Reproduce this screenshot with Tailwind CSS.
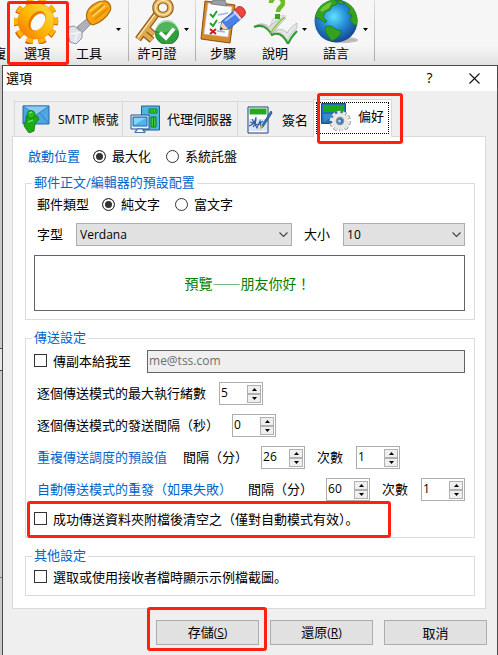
<!DOCTYPE html>
<html lang="zh">
<head>
<meta charset="utf-8">
<meta name="viewport" content="width=device-width, initial-scale=1">
<title>選項</title>
<script src="https://cdn.jsdelivr.net/npm/@tailwindcss/browser@4"></script>
</head>
<body class="min-h-screen flex flex-col bg-[#c9c9c9] text-black text-[13px] leading-[18px] font-['Open_Sans','Noto_Sans_CJK_SC',sans-serif]">

<!-- Toolbar -->
<nav aria-label="工具列" class="flex h-[65px] overflow-hidden whitespace-nowrap bg-linear-to-b from-[#f6f6f6] from-70% to-[#e2e2e2]">
  <button class="w-2 shrink-0 flex justify-end items-end pb-[3px] pr-[2px] overflow-hidden">複</button>
  <button class="relative w-[58px] shrink-0 flex flex-col items-center">
    <svg class="w-[46px] h-11" viewBox="0 0 46 44" aria-hidden="true">
      <defs><linearGradient id="gear" x1="0" y1="1" x2="1" y2="0"><stop offset="0" stop-color="#f56a00"/><stop offset=".45" stop-color="#ffb400"/><stop offset="1" stop-color="#ffe24a"/></linearGradient></defs>
      <g transform="rotate(25 22 21)">
        <ellipse cx="22" cy="22" rx="19" ry="20" fill="none" stroke="#d9620a" stroke-width="7" pathLength="100" stroke-dasharray="5.6 4.4"/>
        <ellipse cx="22" cy="21" rx="18.500" ry="19.500" fill="none" stroke="#ffb508" stroke-width="6.500" pathLength="100" stroke-dasharray="5.4 4.6" stroke-dashoffset="-.2"/>
      </g>
      <path fill="url(#gear)" stroke="#e08a0c" stroke-width=".6" d="M22 3a18 18 0 1 0 .1 0z"/>
      <ellipse cx="23" cy="21" rx="7.500" ry="11" transform="rotate(35 23 21)" fill="#e87a00"/>
      <ellipse cx="24" cy="22" rx="6" ry="9.500" transform="rotate(35 24 22)" fill="#fafafa"/>
    </svg>
    <span>選項</span>
    <span class="absolute inset-y-0 -left-px -right-[3px] top-px border-[3px] border-[#ff2010] rounded-[3px] pointer-events-none"></span>
  </button>
  <button class="w-[46px] shrink-0 flex flex-col items-center">
    <svg class="w-[46px] h-11" viewBox="0 0 46 44" aria-hidden="true">
      <path d="M11 27l12-10 4 5-11 11z" fill="#aeb2ba" stroke="#777" stroke-width=".7"/>
      <path d="M3 27l5-1 8 6v6l-6 6-6-2-2-7z" fill="#dfe3ea" stroke="#8d93a0" stroke-width="1"/>
      <path d="M4 34l7-1 4-1M11 33l-2 9" stroke="#fff" fill="none"/>
      <path d="M21 13c1-6 10-12 16-12 6-1 9 6 7 10-3 6-10 12-17 14-4-1-8-7-6-12z" fill="#f7a511" stroke="#b56608" stroke-width="1.2"/>
      <path d="M26 14L37 5M29 19L41 9" stroke="#d9860a" stroke-width="1.500" stroke-linecap="round"/>
      <path d="M27 16L39 6M24 11L35 3" stroke="#ffdc62" stroke-width="1.500" stroke-linecap="round"/>
    </svg>
    <span>工具</span>
  </button>
  <button aria-label="工具選單" class="w-3 shrink-0 flex items-start justify-center pt-7"><svg class="w-[5px] h-[3px]" viewBox="0 0 5 3"><path d="M0 0h5L2.5 3z"/></svg></button>
  <span class="ml-1 w-px shrink-0 bg-linear-to-b from-[#ddd] to-[#aaa] mb-1"></span>
  <button class="ml-[5px] w-[46px] shrink-0 flex flex-col items-center">
    <svg class="w-[46px] h-11" viewBox="0 0 46 46" preserveAspectRatio="none" aria-hidden="true">
      <path d="M23 14L4 41M13 30l7 6M10 35l8 7" stroke="#8e5a17" stroke-width="7" fill="none"/>
      <path d="M23 14L4 41M13 30l7 6M10 35l8 7" stroke="#dfaa52" stroke-width="4.5" fill="none"/>
      <path d="M21 15L4 39" stroke="#ffeaa5" stroke-width="1.3"/>
      <circle cx="29" cy="8" r="7.5" fill="none" stroke="#8e5a17" stroke-width="6.5"/>
      <circle cx="29" cy="8" r="7.5" fill="none" stroke="#e3b160" stroke-width="4.5"/>
      <circle cx="29" cy="8" r="7.5" fill="none" stroke="#ffe9a8" stroke-width="1.2"/>
      <circle cx="33" cy="35" r="11.5" fill="#2f9e3c" stroke="#1b7a2c"/>
      <path d="M22 32a11 11 0 0 1 22 0c-7-2-14 5-22 0z" fill="#6cc56f" opacity=".6"/>
      <path d="M26 34l6 6 8-10" fill="none" stroke="#fff" stroke-width="3.6"/>
    </svg>
    <span>許可證</span>
  </button>
  <button aria-label="許可證選單" class="w-3 shrink-0 flex items-start justify-center pt-7"><svg class="w-[5px] h-[3px]" viewBox="0 0 5 3"><path d="M0 0h5L2.5 3z"/></svg></button>
  <span class="ml-[3px] w-px shrink-0 bg-linear-to-b from-[#ddd] to-[#aaa] mb-1"></span>
  <button class="ml-1 w-[46px] shrink-0 flex flex-col items-center">
    <svg class="w-[46px] h-11" viewBox="0 0 46 44" aria-hidden="true">
      <path d="M5 1l30 4-5 38-29-4z" fill="#d88a28" stroke="#8a4f0e" stroke-width="1" stroke-linejoin="round"/>
      <path d="M8 3l24 4-4 30-24-3z" fill="#fbfcff" stroke="#b8c4dd" stroke-width=".6"/>
      <path d="M13 0h12l2 6-16-2z" fill="#9a9ea6" stroke="#666" stroke-width=".6"/>
      <path d="M18 15l10-2M18 23l7-2M17 31l8 1" stroke="#a5b4dc" stroke-width="1.3"/>
      <path d="M10 14l3 3 4-6M10 23l3 3 4-6" fill="none" stroke="#23a32b" stroke-width="2"/>
      <path d="M10 29l6 5M16 29l-6 5" stroke="#cf1b16" stroke-width="2"/>
      <path d="M20 30l2-9 13-11 7 8-13 11z" fill="#4b7fe8" stroke="#2449a8" stroke-width=".8"/>
      <path d="M25 21l12-9" stroke="#a5c6ff" stroke-width="2"/>
      <path d="M20 30l2-8 6 7z" fill="#f2d7a4"/><path d="M20 30l1-3 2 2z" fill="#222"/>
      <path d="M33 12l2-2 7 8-2 2z" fill="#cfd6e3"/>
      <path d="M35 10c2-4 6-5 9-1s1 6-2 9z" fill="#f0453c" stroke="#b31f1c" stroke-width=".8"/>
    </svg>
    <span>步驟</span>
  </button>
  <button class="ml-[6px] w-[46px] shrink-0 flex flex-col items-center">
    <svg class="w-[46px] h-11" viewBox="0 0 46 44" aria-hidden="true">
      <path d="M20 36c4-8 9-15 14-20-6-1-10 0-13 3-3 6-4 11-1 17z" fill="#e9ebea" stroke="#b6bbb7" stroke-width=".6"/>
      <path d="M3 26c7-4 12-1 17 9 4-7 9-12 14-17-6 0-14 5-17 9-4-4-9-4-14-1z" fill="#d9dcda" stroke="#a2a8a4" stroke-width=".6"/>
      <path d="M18 34c7-4 13-2 17 7 2-5 6-9 10-13v-5c-5 3-8 6-10 10-4-5-9-5-17 1z" fill="#e4e6e5" stroke="#a2a8a4" stroke-width=".6"/>
      <path d="M2 27c8-3 13 0 18 8 6-3 11-1 16 9 2-5 5-9 9-13" fill="none" stroke="#2b9b2b" stroke-width="2"/>
      <path d="M18 34c4-7 9-12 14-17" stroke="#8cc63b" stroke-width="1.5" fill="none"/>
      <path d="M19 3c0-7 12-8 12 0 0 4-5 4-5 9" fill="none" stroke="#6dbd25" stroke-width="4.5"/>
      <path d="M23 14h5v5h-5z" fill="#36a426"/>
    </svg>
    <span>說明</span>
  </button>
  <button aria-label="說明選單" class="w-3 shrink-0 flex items-start justify-center pt-7"><svg class="w-[5px] h-[3px]" viewBox="0 0 5 3"><path d="M0 0h5L2.5 3z"/></svg></button>
  <button class="ml-[3px] w-[46px] shrink-0 flex flex-col items-center">
    <svg class="w-[46px] h-11" viewBox="0 0 46 44" aria-hidden="true">
      <defs><radialGradient id="sea" cx=".45" cy=".4" r=".65"><stop offset="0" stop-color="#62e2ff"/><stop offset=".45" stop-color="#238fd8"/><stop offset="1" stop-color="#143c86"/></radialGradient>
      <clipPath id="disc"><circle cx="23" cy="21" r="21.5"/></clipPath></defs>
      <ellipse cx="31" cy="40" rx="14" ry="3" fill="#bbb"/>
      <circle cx="23" cy="21" r="21.5" fill="url(#sea)"/>
      <g clip-path="url(#disc)" fill="#36a11f" stroke="#1d7415" stroke-width=".7">
        <path d="M3 13C6 5 12 0 20-1l5 3-2 3-4 1-2 4-5 2-2 5 4 4-2 2-5-4-5-2z"/>
        <path d="M12 27c4-2 8-1 10 2l6 2c0 4-3 5-5 8l-5 2c-1-4-6-6-6-14z"/>
        <path d="M31 3l5-3 8 9 3 8-1 8-5 0-4-5 2-5-4-2 2-4z"/>
        <path d="M24 0l6 1 1 3-5 0z"/>
      </g>
      <path d="M7 10c3-4 7-7 12-8l-3 6-7 4z" fill="#8cdc3a" opacity=".7"/>
    </svg>
    <span>語言</span>
  </button>
  <button aria-label="語言選單" class="w-3 shrink-0 flex items-start justify-center pt-7"><svg class="w-[5px] h-[3px]" viewBox="0 0 5 3"><path d="M0 0h5L2.5 3z"/></svg></button>
  <span class="ml-[3px] w-px shrink-0 bg-linear-to-b from-[#ddd] to-[#aaa] mb-1"></span>
</nav>

<div class="flex flex-1">
  <!-- Sliver of the window behind the dialog -->
  <div class="w-[2px] shrink-0 flex flex-col">
    <div class="h-[283px]"></div>
    <div class="h-[23px] border-y border-[#444] bg-[#e4e4e4]"></div>
    <div class="h-[207px] border-b border-[#777]"></div>
  </div>

  <!-- Options dialog -->
  <main role="dialog" aria-labelledby="dialog-title" class="flex-1 flex flex-col border-t border-x border-[#4a4a4a] bg-[#efefef]">
    <header class="h-[25px] bg-white flex items-center pl-[3px]">
      <h1 id="dialog-title" class="flex-1 pb-[2px]">選項</h1>
      <button aria-label="說明" class="w-[45px] font-medium text-[14px] pb-[2px]">?</button>
      <button aria-label="關閉" class="w-[45px] flex justify-center"><svg class="w-[11px] h-[11px]" viewBox="0 0 11 11"><path d="M.5.5l10 10M10.5.5l-10 10" stroke="#111" stroke-width="1.1"/></svg></button>
    </header>

    <div class="pl-[9px] pr-[11px] pt-2 flex flex-col">
      <div role="tablist" class="flex items-end pl-[2px] -mb-px whitespace-nowrap">
        <button role="tab" class="h-9 w-[109px] border border-[#d9d9d9] flex items-center pl-[7px] gap-2">
          <svg class="w-7 h-7 shrink-0" viewBox="0 0 28 28" aria-hidden="true">
            <path d="M1 1h26v18H1z" fill="#4ea6e4" stroke="#27669f"/><path d="M1 1l13 9L27 1zM1 19l9-11M27 19L18 8" fill="#8ccbf4" stroke="#2c75b3" stroke-width=".8"/>
            <path d="M4 11l6 1 5-1 2 3-4 5-1 7-5 2-5-7 2-5z" fill="#1dac16" stroke="#11730c" stroke-width=".8"/><circle cx="9" cy="9.500" r="4" fill="#25bd1d" stroke="#11730c" stroke-width=".8"/><path d="M7 8l3-1M6 17l5-2" stroke="#86ee75" stroke-width="1.300"/>
          </svg><span><span class="text-[12px]">SMTP</span> 帳號</span>
        </button>
        <button role="tab" class="h-9 w-[115px] border-y border-r border-[#d9d9d9] flex items-center pl-[7px] gap-[7px]">
          <svg class="w-[30px] h-7 shrink-0" viewBox="0 0 30 28" aria-hidden="true">
            <path d="M11.500 1h18v24h-18z" fill="#4db5ea" stroke="#255e96"/><path d="M19 4h8v4h-8z" fill="#48dd35" stroke="#137d1d"/><path d="M20 6h6" stroke="#104f16" stroke-dasharray="1.500 1"/><path d="M21 12h5v10h-5z" fill="#3ccf2e" stroke="#137d1d"/><path d="M23.500 12v10" stroke="#137d1d"/>
            <path d="M1 10h18v14H1z" fill="#e8f5fd" stroke="#1e4f86"/><path d="M3 12h14v9H3z" fill="#4eb6ef" stroke="#2365a4"/><path d="M4 13h12L4 20z" fill="#87d3fb"/><path d="M7 24h6v2h2v1.500H5V26h2z" fill="#fff" stroke="#1e4f86" stroke-width=".8"/>
          </svg><span>代理伺服器</span>
        </button>
        <button role="tab" class="h-9 w-[75px] border-t border-[#d9d9d9] flex items-center pl-[9px] gap-[9px]">
          <svg class="w-[26px] h-7 shrink-0" viewBox="0 0 26 28" aria-hidden="true">
            <path d="M1 1h20v26H1z" fill="#fff" stroke="#153e70"/><path d="M2.500 2.500h17v6h-17z" fill="#22ab1c"/><path d="M2 13h18v12H2z" fill="#d9e5fa"/><path d="M2 20c5-2 6-4 7-9 0 5-1 8-3 10M3 16l8 3 5-4M5 13l5 9 3-7 1 6" fill="none" stroke="#315e97" stroke-width="1.200"/><path d="M24 5l1 2-9 14-2 1 1-3z" fill="#3378c0" stroke="#153e70" stroke-width=".7"/><path d="M14 19l2 1-4 5z" fill="#edbd22"/>
          </svg><span>簽名</span>
        </button>
        <button role="tab" aria-selected="true" class="relative h-[38px] w-[79px] border-t border-x border-[#d9d9d9] bg-white p-[2px] pb-[3px]">
          <span class="h-full border border-dotted border-black flex items-start gap-[7px] pl-1">
            <svg class="w-[30px] h-7 shrink-0" viewBox="0 0 30 28" aria-hidden="true">
              <path d="M.5.500h24v20H.5z" fill="#206eb7" stroke="#174f89"/><path d="M2 2h21v7H2z" fill="#1da71b"/><path d="M2 11h14L3 19z" fill="#3a89ce"/>
              <circle cx="19" cy="18" r="9" fill="none" stroke="#666" stroke-width="3.500" pathLength="100" stroke-dasharray="6.5 3.5"/><circle cx="19" cy="18" r="8.500" fill="none" stroke="#e4e4e4" stroke-width="3.500" pathLength="100" stroke-dasharray="6 4"/><circle cx="19" cy="18" r="8" fill="#e8e8e8"/><circle cx="19" cy="18" r="3.500" fill="#2873b8" stroke="#8a929c" stroke-width="1.500"/><circle cx="18.500" cy="18" r="1.500" fill="#b9dcf5"/>
            </svg><span class="pt-1">偏好</span>
          </span>
          <span class="absolute -right-3 -top-[7px] -bottom-[7px] left-[3px] border-[3px] border-[#ff2010] rounded-[3px] pointer-events-none"></span>
        </button>
      </div>

      <form role="tabpanel" class="border border-[#d9d9d9] bg-white pl-3 pr-[10px] pt-[10px] pb-3 flex flex-col whitespace-nowrap">
        <div class="h-[18px] mb-2 flex items-center pl-[3px]">
          <span class="text-[#0066cc] mr-[13px]">啟動位置</span>
          <label class="flex items-center gap-[6px] mr-[15px]"><input type="radio" name="start" checked class="appearance-none size-[13px] rounded-full border border-[#333] checked:bg-[#333] shadow-[inset_0_0_0_2px_#fff]">最大化</label>
          <label class="flex items-center gap-[6px]"><input type="radio" name="start" class="appearance-none size-[13px] rounded-full border border-[#333]">系統託盤</label>
        </div>

        <fieldset class="border border-[#dcdcdc] pl-2 pr-[9px] pb-2">
          <legend class="h-5 px-[2px] -ml-[2px] text-[#0066cc]">郵件正文/編輯器的預設配置</legend>
          <div class="h-[22px] flex items-center pl-[3px]">
            <span class="mr-[13px]">郵件類型</span>
            <label class="flex items-center gap-[6px] mr-[15px]"><input type="radio" name="type" checked class="appearance-none size-[13px] rounded-full border border-[#333] checked:bg-[#333] shadow-[inset_0_0_0_2px_#fff]">純文字</label>
            <label class="flex items-center gap-[6px]"><input type="radio" name="type" class="appearance-none size-[13px] rounded-full border border-[#333]">富文字</label>
          </div>
          <div class="mt-2 flex items-center pl-[3px]">
            <label for="font" class="mr-[13px] pb-[2px]">字型</label>
            <span class="relative flex-[216] flex mr-3">
              <select id="font" class="appearance-none w-full h-[23px] border border-[#adadad] bg-[#e1e1e1] pl-[3px] text-[12px]"><option>Verdana</option></select>
              <svg class="absolute right-1 top-[9px] w-[9px] h-[6px] pointer-events-none" viewBox="0 0 9 6"><path d="M.5.500l4 4 4-4" fill="none" stroke="#444" stroke-width="1.100"/></svg>
            </span>
            <label for="size" class="mr-[13px] pb-[2px]">大小</label>
            <span class="relative flex-[122] flex">
              <select id="size" class="appearance-none w-full h-[23px] border border-[#adadad] bg-[#e1e1e1] pl-[3px] text-[12px]"><option>10</option></select>
              <svg class="absolute right-1 top-[9px] w-[9px] h-[6px] pointer-events-none" viewBox="0 0 9 6"><path d="M.5.500l4 4 4-4" fill="none" stroke="#444" stroke-width="1.100"/></svg>
            </span>
          </div>
          <div lang="zh-Hant" class="mt-[9px] h-14 pr-1 border border-[#646464] flex items-center justify-center text-[14px] text-[#008000] font-['Noto_Sans_CJK_TC',sans-serif]">預覽——朋友你好！</div>
        </fieldset>

        <fieldset class="mt-2 border border-[#dcdcdc] pl-2 pr-[9px] pb-[10px]">
          <legend class="h-5 px-[2px] -ml-[2px] text-[#0066cc]">傳送設定</legend>
          <div class="pt-[2px] flex flex-col gap-[9px]">
            <div class="h-[23px] flex items-center">
              <label class="flex items-center gap-[6px] mr-4 pb-[2px]"><input type="checkbox" class="appearance-none size-[13px] border border-[#333]">傳副本給我至</label>
              <input type="text" aria-label="副本地址" value="me@tss.com" disabled class="flex-1 min-w-0 h-full border border-[#646464] bg-[#efefef] px-[1px] pb-[2px] text-[12px] text-[#6d6d6d]">
            </div>
            <div class="h-[23px] flex items-center pl-[3px]">
              <label for="threads" class="mr-[13px] pb-[2px]">逐個傳送模式的最大執行緒數</label>
              <span class="w-11 h-[23px] border border-[#adadad] flex items-center pl-[1px] pr-[1px]">
                <input id="threads" value="5" class="w-0 flex-1 min-w-0 pb-[2px] text-[12px]">
                <span class="flex flex-col w-[14px] h-[18px]"><button type="button" aria-label="增加" class="flex-1 border border-[#b0b0b0] bg-[#efefef] flex items-center justify-center"><svg class="w-[5px] h-[3px]" viewBox="0 0 5 3"><path d="M0 3h5L2.500 0z"/></svg></button><button type="button" aria-label="減少" class="flex-1 border border-[#b0b0b0] bg-[#efefef] flex items-center justify-center"><svg class="w-[5px] h-[3px]" viewBox="0 0 5 3"><path d="M0 0h5L2.500 3z"/></svg></button></span>
              </span>
            </div>
            <div class="h-[23px] flex items-center pl-[3px]">
              <label for="gap" class="mr-[13px] pb-[2px]">逐個傳送模式的發送間隔（秒）</label>
              <span class="w-11 h-[23px] border border-[#adadad] flex items-center pl-[1px] pr-[1px]">
                <input id="gap" value="0" class="w-0 flex-1 min-w-0 pb-[2px] text-[12px]">
                <span class="flex flex-col w-[14px] h-[18px]"><button type="button" aria-label="增加" class="flex-1 border border-[#b0b0b0] bg-[#efefef] flex items-center justify-center"><svg class="w-[5px] h-[3px]" viewBox="0 0 5 3"><path d="M0 3h5L2.500 0z"/></svg></button><button type="button" aria-label="減少" class="flex-1 border border-[#b0b0b0] bg-[#efefef] flex items-center justify-center"><svg class="w-[5px] h-[3px]" viewBox="0 0 5 3"><path d="M0 0h5L2.500 3z"/></svg></button></span>
              </span>
            </div>
            <div class="h-[23px] flex items-center pl-[3px]">
              <span class="text-[#0066cc] mr-4 pb-[2px]">重複傳送調度的預設值</span>
              <label for="rep-gap" class="mr-[13px] pb-[2px]">間隔（分）</label>
              <span class="w-11 h-[23px] border border-[#adadad] flex items-center pl-[1px] pr-[1px]">
                <input id="rep-gap" value="26" class="w-0 flex-1 min-w-0 pb-[2px] text-[12px]">
                <span class="flex flex-col w-[14px] h-[18px]"><button type="button" aria-label="增加" class="flex-1 border border-[#b0b0b0] bg-[#efefef] flex items-center justify-center"><svg class="w-[5px] h-[3px]" viewBox="0 0 5 3"><path d="M0 3h5L2.500 0z"/></svg></button><button type="button" aria-label="減少" class="flex-1 border border-[#b0b0b0] bg-[#efefef] flex items-center justify-center"><svg class="w-[5px] h-[3px]" viewBox="0 0 5 3"><path d="M0 0h5L2.500 3z"/></svg></button></span>
              </span>
              <label for="rep-n" class="ml-3 mr-[13px] pb-[2px]">次數</label>
              <span class="w-11 h-[23px] border border-[#adadad] flex items-center pl-[1px] pr-[1px]">
                <input id="rep-n" value="1" class="w-0 flex-1 min-w-0 pb-[2px] text-[12px]">
                <span class="flex flex-col w-[14px] h-[18px]"><button type="button" aria-label="增加" class="flex-1 border border-[#b0b0b0] bg-[#efefef] flex items-center justify-center"><svg class="w-[5px] h-[3px]" viewBox="0 0 5 3"><path d="M0 3h5L2.500 0z"/></svg></button><button type="button" aria-label="減少" class="flex-1 border border-[#b0b0b0] bg-[#efefef] flex items-center justify-center"><svg class="w-[5px] h-[3px]" viewBox="0 0 5 3"><path d="M0 0h5L2.500 3z"/></svg></button></span>
              </span>
            </div>
            <div class="h-[23px] flex items-center pl-[3px]">
              <span class="text-[#0066cc] mr-4 pb-[2px]">自動傳送模式的重發（如果失敗）</span>
              <label for="auto-gap" class="mr-[13px] pb-[2px]">間隔（分）</label>
              <span class="w-11 h-[23px] border border-[#adadad] flex items-center pl-[1px] pr-[1px]">
                <input id="auto-gap" value="60" class="w-0 flex-1 min-w-0 pb-[2px] text-[12px]">
                <span class="flex flex-col w-[14px] h-[18px]"><button type="button" aria-label="增加" class="flex-1 border border-[#b0b0b0] bg-[#efefef] flex items-center justify-center"><svg class="w-[5px] h-[3px]" viewBox="0 0 5 3"><path d="M0 3h5L2.500 0z"/></svg></button><button type="button" aria-label="減少" class="flex-1 border border-[#b0b0b0] bg-[#efefef] flex items-center justify-center"><svg class="w-[5px] h-[3px]" viewBox="0 0 5 3"><path d="M0 0h5L2.500 3z"/></svg></button></span>
              </span>
              <label for="auto-n" class="ml-3 mr-[13px] pb-[2px]">次數</label>
              <span class="w-11 h-[23px] border border-[#adadad] flex items-center pl-[1px] pr-[1px]">
                <input id="auto-n" value="1" class="w-0 flex-1 min-w-0 pb-[2px] text-[12px]">
                <span class="flex flex-col w-[14px] h-[18px]"><button type="button" aria-label="增加" class="flex-1 border border-[#b0b0b0] bg-[#efefef] flex items-center justify-center"><svg class="w-[5px] h-[3px]" viewBox="0 0 5 3"><path d="M0 3h5L2.500 0z"/></svg></button><button type="button" aria-label="減少" class="flex-1 border border-[#b0b0b0] bg-[#efefef] flex items-center justify-center"><svg class="w-[5px] h-[3px]" viewBox="0 0 5 3"><path d="M0 0h5L2.500 3z"/></svg></button></span>
              </span>
            </div>
            <div class="h-[17px] flex items-center">
              <label class="relative flex items-center gap-[6px]"><input type="checkbox" class="appearance-none size-[13px] border border-[#333]">成功傳送資料夾附檔後清空之（僅對自動模式有效）。
                <span class="absolute -left-[7px] -right-8 -top-[9px] -bottom-[10px] border-[3px] border-[#ff2010] rounded-[3px] pointer-events-none"></span>
              </label>
            </div>
          </div>
        </fieldset>

        <fieldset class="mt-2 border border-[#dcdcdc] pl-2 pr-[9px] pb-[10px]">
          <legend class="h-5 px-[2px] -ml-[2px] text-[#0066cc]">其他設定</legend>
          <div class="pt-[2px]">
            <label class="h-[17px] flex items-center gap-[6px]"><input type="checkbox" class="appearance-none size-[13px] border border-[#333]">選取或使用接收者檔時顯示示例檔截圖。</label>
          </div>
        </fieldset>
      </form>

      <footer class="mt-[11px] -mr-px flex justify-end gap-[11px]">
        <button class="relative w-[103px] h-[25px] border border-[#adadad] bg-[#e1e1e1]">存儲<span class="text-[12px]">(<u>S</u>)</span>
          <span class="absolute -left-[10px] -right-[9px] -top-[14px] -bottom-[7px] border-[3px] border-[#ff2010] rounded-[3px] pointer-events-none"></span>
        </button>
        <button class="w-[103px] h-[25px] border border-[#adadad] bg-[#e1e1e1]">還原<span class="text-[12px]">(<u>R</u>)</span></button>
        <button class="w-[103px] h-[25px] border border-[#adadad] bg-[#e1e1e1]">取消</button>
      </footer>
    </div>
  </main>
</div>
</body>
</html>
